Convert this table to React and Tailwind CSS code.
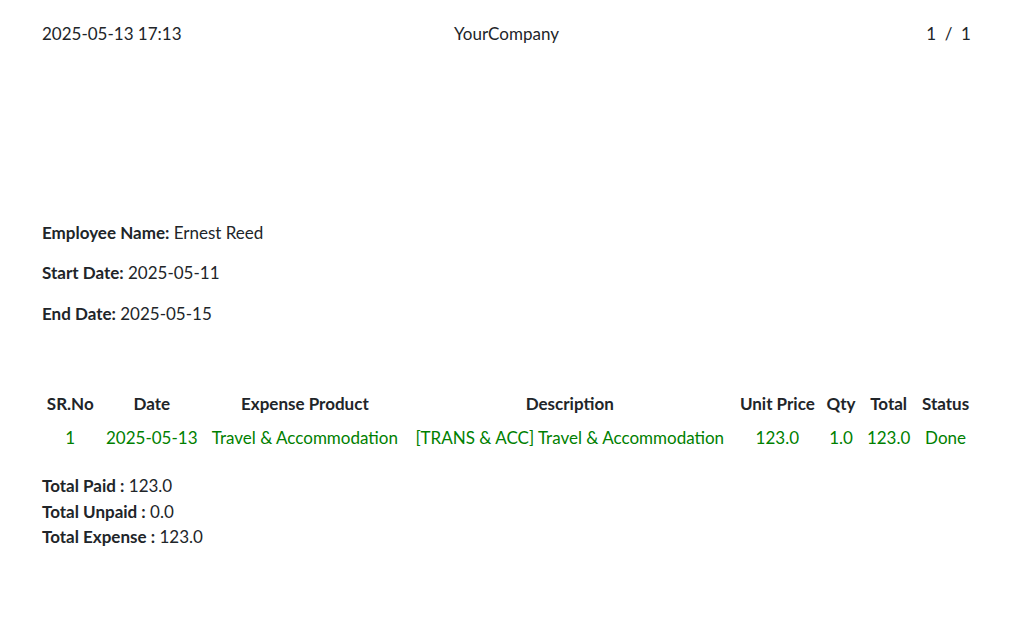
const rows = [
  {
    sr: 1,
    date: "2025-05-13",
    product: "Travel & Accommodation",
    description: "[TRANS & ACC] Travel & Accommodation",
    unitPrice: "123.0",
    qty: "1.0",
    total: "123.0",
    status: "Done",
  },
];

const App = () => {
  return (
    <div
      className="w-[1010px] h-[624px] bg-white text-[#212529] text-[17px] leading-[25.5px] pl-[42px] pr-[39px]"
      style={{ fontFamily: "Lato, 'Noto Sans', sans-serif" }}
    >
      {/* Header */}
      <div className="grid grid-cols-3 items-center pt-[21px]">
        <span>2025-05-13 17:13</span>
        <span className="text-center">YourCompany</span>
        <span className="text-right">1&nbsp;&nbsp;/&nbsp;&nbsp;1</span>
      </div>

      {/* Employee info */}
      <div className="mt-[173px]">
        <p className="mb-[15px]">
          <b>Employee Name:</b> Ernest Reed
        </p>
        <p className="mb-[15px]">
          <b>Start Date:</b> 2025-05-11
        </p>
        <p>
          <b>End Date:</b> 2025-05-15
        </p>
      </div>

      {/* Expense table */}
      <table className="w-[calc(100%+5px)] -ml-[1px] mt-[61px] border-collapse">
        <thead>
          <tr>
            <th className="px-[5px] py-[4px] font-bold">SR.No</th>
            <th className="px-[5px] py-[4px] font-bold">Date</th>
            <th className="px-[5px] py-[4px] font-bold">Expense Product</th>
            <th className="px-[5px] py-[4px] font-bold">Description</th>
            <th className="px-[5px] py-[4px] font-bold">Unit Price</th>
            <th className="px-[5px] py-[4px] font-bold">Qty</th>
            <th className="px-[5px] py-[4px] font-bold">Total</th>
            <th className="px-[5px] py-[4px] font-bold">Status</th>
          </tr>
        </thead>
        <tbody>
          {rows.map((r) => (
            <tr key={r.sr} className="text-[#008000] text-center">
              <td className="px-[5px] py-[4px]">{r.sr}</td>
              <td className="px-[5px] py-[4px]">{r.date}</td>
              <td className="px-[5px] py-[4px]">{r.product}</td>
              <td className="px-[5px] py-[4px]">{r.description}</td>
              <td className="px-[5px] py-[4px]">{r.unitPrice}</td>
              <td className="px-[5px] py-[4px]">{r.qty}</td>
              <td className="px-[5px] py-[4px]">{r.total}</td>
              <td className="px-[5px] py-[4px]">{r.status}</td>
            </tr>
          ))}
        </tbody>
      </table>

      {/* Totals */}
      <div className="mt-[19px]">
        <div>
          <b>Total Paid :</b> 123.0
        </div>
        <div>
          <b>Total Unpaid :</b> 0.0
        </div>
        <div>
          <b>Total Expense :</b> 123.0
        </div>
      </div>
    </div>
  );
};

export default App;
